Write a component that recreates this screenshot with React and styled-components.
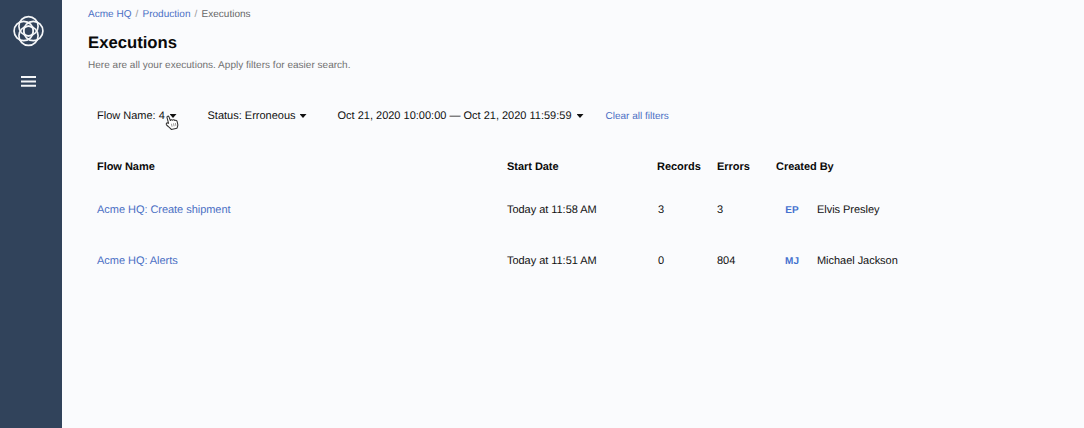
import React from "react";
import styled, { createGlobalStyle } from "styled-components";

const GlobalStyle = createGlobalStyle`
  *, *::before, *::after { box-sizing: border-box; }
  body {
    margin: 0;
    background: #fafbfd;
    color: #111;
    font-family: "Liberation Sans", Arial, sans-serif;
    font-size: 11px;
    text-rendering: geometricPrecision;
  }
`;

const Page = styled.div`
  display: flex;
  height: 100vh;
  overflow: hidden;
`;

const Sidebar = styled.nav`
  width: 62px;
  flex: none;
  display: flex;
  flex-direction: column;
  align-items: flex-start;
  gap: 26px;
  padding: 15px 0 0 12px;
  background: #31435b;
`;

const MenuButton = styled.button`
  width: 16px;
  height: 16px;
  margin-left: 8px;
  padding: 0;
  border: 0;
  background: none;
  svg { display: block; }
`;

const Main = styled.main`
  flex: 1;
  padding: 8px 0 0 26px;
`;

const Breadcrumbs = styled.div`
  display: flex;
  gap: 4px;
  height: 14px;
  line-height: 14px;
  font-size: 10px;
  letter-spacing: 0.02px;
  color: #666;
`;

const Link = styled.a`
  color: #4a6fc4;
  font-size: ${(p) => p.$size || 11}px;
  white-space: nowrap;
`;

const Slash = styled.span`
  width: 3px;
  color: #999;
`;

const Title = styled.h1`
  margin: 10px 0 0;
  height: 22px;
  line-height: 22px;
  font-size: 16.7px;
  color: #0a0a0a;
`;

const Subtitle = styled.p`
  margin: 5px 0 0;
  height: 14px;
  line-height: 14px;
  font-size: 10px;
  letter-spacing: 0.02px;
  color: #707070;
`;

const Filters = styled.div`
  display: flex;
  align-items: center;
  height: 20px;
  margin: 33px 0 0 9px;
`;

const Filter = styled.div`
  position: relative;
  display: flex;
  align-items: center;
  justify-content: space-between;
  width: ${(p) => p.$width}px;
  margin-right: ${(p) => p.$after}px;
  white-space: nowrap;
`;

const Caret = styled.span`
  width: 7px;
  height: 4px;
  background: #111;
  clip-path: polygon(0 0, 100% 0, 50% 100%);
`;

const Pointer = styled.svg`
  position: absolute;
  left: 68px;
  top: 4px;
`;

const Table = styled.div`
  margin: 31px 0 0 9px;
  letter-spacing: -0.04px;
`;

const Row = styled.div`
  display: grid;
  grid-template-columns: 410px 150px 60px 59px 1fr;
  align-items: center;
  height: 51px;
`;

const HeaderRow = styled(Row)`
  height: 20px;
  margin-bottom: 7px;
  font-weight: 700;
  color: #0a0a0a;
`;

const Cell = styled.div`
  white-space: nowrap;
  padding-left: ${(p) => p.$inset || 0}px;
`;

const Creator = styled.div`
  display: flex;
  align-items: center;
`;

const Initials = styled.span`
  width: 32px;
  margin-right: 9px;
  padding-top: 1px;
  text-align: center;
  font-size: 10px;
  font-weight: 700;
  color: #4371cf;
`;

const executions = [
  { name: "Acme HQ: Create shipment", start: "Today at 11:58 AM", records: 3, errors: 3, initials: "EP", user: "Elvis Presley" },
  { name: "Acme HQ: Alerts", start: "Today at 11:51 AM", records: 0, errors: 804, initials: "MJ", user: "Michael Jackson" },
];

const Logo = () => (
  <svg width="33" height="32" viewBox="-16.5 -16 33 32" fill="none" stroke="#f4f6f8" strokeWidth="1.7">
    <circle cx="0" cy="-4.8" r="9.6" />
    <circle cx="0" cy="4.8" r="9.6" />
    <circle cx="-4.8" cy="0" r="9.6" />
    <circle cx="4.8" cy="0" r="9.6" />
    <circle cx="0" cy="0" r="4.8" strokeWidth="1.3" />
  </svg>
);

const HandPointer = () => (
  <Pointer width="15" height="17" viewBox="0 0 14 16">
    <path
      d="M3.3 8.8 1.8 3.2C1.5 2 3.2 1.5 3.7 2.7L5 6.1C5.3 5.2 6.6 5.1 7 5.9 7.6 5.2 8.8 5.2 9.2 6.1 10.2 5.6 11.1 6.1 11.4 7.1L12 9.9C12.2 11.3 11.5 12.1 11.2 13.4L5.9 14.5C4.8 12.8 2.6 11.7 1.4 10.2.6 9.1 1.6 8.1 2.5 8.5Z"
      fill="#fff"
      stroke="#333"
      strokeWidth="1"
      strokeLinejoin="round"
    />
    <path d="M6 9.2l.6 2.8M7.9 8.8l.6 2.8M9.7 8.5l.5 2.7" stroke="#777" strokeWidth=".7" />
  </Pointer>
);

export default function App() {
  return (
    <Page>
      <GlobalStyle />
      <Sidebar>
        <Logo />
        <MenuButton aria-label="Menu">
          <svg width="16" height="16" viewBox="0 0 16 16" fill="#f4f6f8">
            <path d="M1 3h15v2H1zM1 7.4h15v2H1zM1 11.8h15v2H1z" />
          </svg>
        </MenuButton>
      </Sidebar>
      <Main>
        <Breadcrumbs>
          <Link $size={10}>Acme HQ</Link>
          <Slash>/</Slash>
          <Link $size={10}>Production</Link>
          <Slash>/</Slash>
          <span>Executions</span>
        </Breadcrumbs>
        <Title>Executions</Title>
        <Subtitle>Here are all your executions. Apply filters for easier search.</Subtitle>
        <Filters>
          <Filter $width={79.5} $after={31}>
            Flow Name: 4<Caret />
            <HandPointer />
          </Filter>
          <Filter $width={99} $after={31}>
            Status: Erroneous<Caret />
          </Filter>
          <Filter $width={246} $after={22}>
            Oct 21, 2020 10:00:00 — Oct 21, 2020 11:59:59<Caret />
          </Filter>
          <Link $size={10}>Clear all filters</Link>
        </Filters>
        <Table>
          <HeaderRow>
            <Cell>Flow Name</Cell>
            <Cell>Start Date</Cell>
            <Cell>Records</Cell>
            <Cell>Errors</Cell>
            <Cell>Created By</Cell>
          </HeaderRow>
          {executions.map((e) => (
            <Row key={e.name}>
              <Cell><Link>{e.name}</Link></Cell>
              <Cell>{e.start}</Cell>
              <Cell $inset={1}>{e.records}</Cell>
              <Cell>{e.errors}</Cell>
              <Creator>
                <Initials>{e.initials}</Initials>
                {e.user}
              </Creator>
            </Row>
          ))}
        </Table>
      </Main>
    </Page>
  );
}
